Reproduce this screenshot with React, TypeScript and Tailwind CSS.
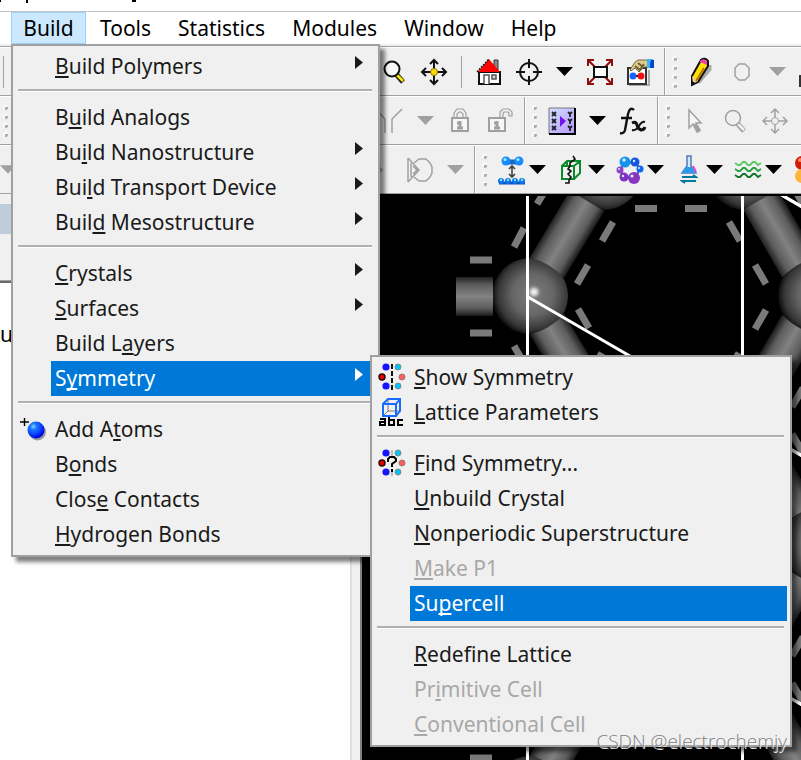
import type { ReactNode } from 'react';

interface MenuEntry {
  label: string;
  // index of the underlined mnemonic letter
  hot: number;
  icon?: ReactNode;
  submenu?: boolean;
  active?: boolean;
  disabled?: boolean;
}

const ATOM_ROWS = [-498, -249, 0, 249, 498];

function MirrorIcon({ question = false }: { question?: boolean }) {
  return (
    <svg width="28" height="28" viewBox="0 0 28 28" aria-hidden="true">
      <circle cx="8" cy="4" r="3.6" fill="#1414ff" />
      <circle cx="8" cy="23" r="3.6" fill="#1414ff" />
      <circle cx="20" cy="4" r="3" fill="#00c4f5" stroke="#7f8c8c" />
      <circle cx="20" cy="23" r="3" fill="#00c4f5" stroke="#7f8c8c" />
      <circle cx="4" cy="14" r="3" fill="#e80000" stroke="#300" strokeWidth="1.4" />
      <circle cx="24" cy="14" r="3" fill="#ff5c5c" stroke="#977" />
      {question ? (
        <>
          <path d="M14 1v6M14 22v5" stroke="#888" />
          <path d="M10 13v-3l2-2h4l2 2v2l-4 3v3M14 20v3" fill="none" stroke="#000" strokeWidth="2" />
        </>
      ) : (
        <path d="M14 1v26" stroke="#111" strokeWidth="2" strokeDasharray="5 2" />
      )}
    </svg>
  );
}

function LatticeIcon() {
  return (
    <svg width="28" height="30" viewBox="0 0 28 30" aria-hidden="true">
      <path d="M10 2v12M10 14h12M10 14l-5 5" stroke="#777" fill="none" />
      <path d="M5 7h13v12H5zM5 7l5-5h12v12l-4 5M18 7l4-5" fill="none" stroke="#176bff" strokeWidth="2" />
      <path
        d="M2 22h5v6H2v-3h5M11 20v8h5v-5h-5M25 23h-5v5h5"
        fill="none"
        stroke="#000"
        strokeWidth="2"
      />
    </svg>
  );
}

function AddAtomIcon() {
  return (
    <svg width="28" height="28" viewBox="0 0 28 28" aria-hidden="true">
      <defs>
        <radialGradient id="blueBall" cx="0.35" cy="0.3" r="0.7">
          <stop offset="0" stopColor="#8fd0ff" />
          <stop offset="0.25" stopColor="#1c7dff" />
          <stop offset="0.7" stopColor="#0838ff" />
          <stop offset="1" stopColor="#0000d8" />
        </radialGradient>
      </defs>
      <circle cx="18.5" cy="17" r="8.5" fill="#999" />
      <circle cx="17" cy="15" r="8.5" fill="url(#blueBall)" />
      <path d="M1 7h9M5.500 3v8" stroke="#000" strokeWidth="1.4" />
    </svg>
  );
}

const buildGroups: MenuEntry[][] = [
  [{ label: 'Build Polymers', hot: 0, submenu: true }],
  [
    { label: 'Build Analogs', hot: 1 },
    { label: 'Build Nanostructure', hot: 2, submenu: true },
    { label: 'Build Transport Device', hot: 3, submenu: true },
    { label: 'Build Mesostructure', hot: 4, submenu: true },
  ],
  [
    { label: 'Crystals', hot: 0, submenu: true },
    { label: 'Surfaces', hot: 0, submenu: true },
    { label: 'Build Layers', hot: 7 },
    { label: 'Symmetry', hot: 1, submenu: true, active: true },
  ],
  [
    { label: 'Add Atoms', hot: 5, icon: <AddAtomIcon /> },
    { label: 'Bonds', hot: 1 },
    { label: 'Close Contacts', hot: 4 },
    { label: 'Hydrogen Bonds', hot: 0 },
  ],
];

const symmetryGroups: MenuEntry[][] = [
  [
    { label: 'Show Symmetry', hot: 0, icon: <MirrorIcon /> },
    { label: 'Lattice Parameters', hot: 0, icon: <LatticeIcon /> },
  ],
  [
    { label: 'Find Symmetry...', hot: 0, icon: <MirrorIcon question /> },
    { label: 'Unbuild Crystal', hot: 0 },
    { label: 'Nonperiodic Superstructure', hot: 0 },
    { label: 'Make P1', hot: 0, disabled: true },
    { label: 'Supercell', hot: 2, active: true },
  ],
  [
    { label: 'Redefine Lattice', hot: 0 },
    { label: 'Primitive Cell', hot: 2, disabled: true },
    { label: 'Conventional Cell', hot: 0, disabled: true },
  ],
];

function MenuRow({ entry }: { entry: MenuEntry }) {
  const { label, hot } = entry;
  let tone = 'text-[#1a1a1a]';
  if (entry.active) tone = 'bg-[#0078d7] text-white';
  if (entry.disabled) tone = 'text-[#a8a8a8]';

  return (
    <button type="button" role="menuitem" disabled={entry.disabled} className="flex h-[35px] w-full text-left">
      <span className="flex w-[38px] shrink-0 items-center self-stretch pb-[2px] pl-[6px]">{entry.icon}</span>
      <span className={`flex h-full flex-1 items-center justify-between pr-3 pb-[2px] pl-1 ${tone}`}>
        <span className="whitespace-nowrap">
          {label.slice(0, hot)}
          <span className="underline decoration-2 underline-offset-2 [text-decoration-skip-ink:none]">{label[hot]}</span>
          {label.slice(hot + 1)}
        </span>
        {entry.submenu && (
          <svg width="8" height="13" viewBox="0 0 8 13" className="mb-[6px]" aria-hidden="true">
            <path d="M0 0l8 6.500-8 6.500z" fill="currentColor" />
          </svg>
        )}
      </span>
    </button>
  );
}

function Menu({ groups, name }: { groups: MenuEntry[][]; name: string }) {
  return (
    <div
      role="menu"
      aria-label={name}
      className="border-2 border-[#a0a0a0] bg-[#f0f0f0] py-[3px] pr-[3px] shadow-[5px_5px_4px_rgba(0,0,0,0.5)]"
    >
      {groups.map((group, i) => (
        <div key={i}>
          {i > 0 && (
            <div className="h-4 pt-[5px] pr-[3px] pl-[5px]">
              <div className="h-[3px] w-full border-t-2 border-b border-t-[#b0b0b0] border-b-white" />
            </div>
          )}
          {group.map((entry) => (
            <MenuRow key={entry.label} entry={entry} />
          ))}
        </div>
      ))}
    </div>
  );
}

function Tool({ label, className = 'w-10', children }: { label: string; className?: string; children: ReactNode }) {
  return (
    <button type="button" aria-label={label} className={`flex h-full shrink-0 items-center justify-center ${className}`}>
      {children}
    </button>
  );
}

function DropArrow({ label, dim = false, className = 'w-[31px]' }: { label: string; dim?: boolean; className?: string }) {
  return (
    <Tool label={label} className={className}>
      <svg width="17" height="9" viewBox="0 0 17 9" aria-hidden="true">
        <path d="M0 0h17L8.500 9z" fill={dim ? '#a0a0a0' : '#000'} />
      </svg>
    </Tool>
  );
}

function Dots() {
  return (
    <div className="flex flex-col gap-1">
      {[0, 1, 2, 3].map((n) => (
        <div key={n} className="h-[5px] w-[5px] rounded-xs border-t-2 border-l-2 border-[#fafafa] bg-[#acacac]" />
      ))}
    </div>
  );
}

function Grip() {
  return (
    <div className="flex h-full w-[22px] shrink-0 items-center gap-[6px] pl-1">
      <div className="h-full w-[2px] border-r border-white bg-[#a0a0a0]" />
      <Dots />
    </div>
  );
}

function Magnifier({ dim = false }: { dim?: boolean }) {
  return (
    <svg width="24" height="26" viewBox="0 0 24 26" aria-hidden="true">
      <path d="M14 15l7 8" stroke={dim ? '#a0a0a0' : '#222'} strokeWidth="5" />
      <path d="M14 15l7 7" stroke={dim ? '#f0f0f0' : '#ffe800'} strokeWidth="2.5" />
      <circle
        cx="10"
        cy="10"
        r="7.5"
        fill={dim ? 'none' : '#f8f8f8'}
        stroke={dim ? '#a0a0a0' : '#111'}
        strokeWidth={dim ? 1.5 : 2}
      />
    </svg>
  );
}

function MoveIcon({ dim = false }: { dim?: boolean }) {
  return (
    <svg width="28" height="28" viewBox="0 0 28 28" aria-hidden="true">
      <path
        d="M14 2v24M2 14h24M10 6l4-4 4 4M10 22l4 4 4-4M6 10l-4 4 4 4M22 10l4 4-4 4"
        fill="none"
        stroke={dim ? '#a0a0a0' : '#111'}
        strokeWidth={dim ? 1.5 : 2}
      />
      <circle cx="14" cy="14" r="3.5" fill={dim ? '#f0f0f0' : '#ffd900'} stroke={dim ? '#a0a0a0' : '#8a7400'} />
    </svg>
  );
}

function HomeIcon() {
  return (
    <svg width="27" height="28" viewBox="0 0 27 28" aria-hidden="true">
      <path d="M18 2h4v10h-4z" fill="#888" stroke="#333" />
      <path d="M3 14h21v12H3z" fill="#fff" stroke="#111" strokeWidth="2" />
      <path d="M13 1l11 13H2z" fill="#f00" />
      <path d="M1 14L13 1" stroke="#111" strokeWidth="1.5" strokeDasharray="2 1" />
      <path d="M8 26v-9h5v9" fill="#fff" stroke="#555" strokeWidth="1.5" />
      <path d="M16 17h4v4h-4z" fill="#ddd" stroke="#555" strokeWidth="1.5" />
    </svg>
  );
}

function TargetIcon() {
  return (
    <svg width="28" height="28" viewBox="0 0 28 28" fill="none" stroke="#111" strokeWidth="2" aria-hidden="true">
      <circle cx="14" cy="14" r="9" />
      <path d="M14 1v9M14 18v9M1 14h9M18 14h9" />
    </svg>
  );
}

function FitIcon() {
  return (
    <svg width="26" height="26" viewBox="0 0 26 26" fill="none" aria-hidden="true">
      <path d="M1 7V1h6M19 1h6v6M25 19v6h-6M7 25H1v-6M1 1l7 7M25 1l-7 7M25 25l-7-7M1 25l7-7" stroke="#8b1010" strokeWidth="2" />
      <path d="M7 8h13v10H7z" fill="#fff" stroke="#111" strokeWidth="2" />
    </svg>
  );
}

function DisplayStyleIcon() {
  return (
    <svg width="30" height="28" viewBox="0 0 30 28" aria-hidden="true">
      <path d="M4 27h20V12" fill="none" stroke="#aaa" strokeWidth="2" />
      <path d="M3 10h18v16H3z" fill="#fff" stroke="#333" strokeWidth="2" />
      <path d="M8 18h8" stroke="#111" strokeWidth="2" />
      <circle cx="8" cy="18" r="3.5" fill="#1565ff" />
      <circle cx="16" cy="18" r="3.5" fill="#f01010" />
      <path d="M5 12l5-8 3-2h10v7h-4l-5 5-4-4-4 3z" fill="#dfcb8d" stroke="#746842" />
      <path d="M10 8l5 4 4-6M13 5l5 4" fill="none" stroke="#6d6236" strokeWidth="2" />
      <path d="M22 1h6v9h-6z" fill="#3ab4f4" />
      <path d="M26 2h3v8h-4V6z" fill="#0048d0" />
    </svg>
  );
}

function PencilIcon() {
  return (
    <svg width="24" height="30" viewBox="0 0 24 30" aria-hidden="true">
      <path d="M8 25l11-13V8" fill="none" stroke="#aaa" strokeWidth="5" />
      <path d="M2 28V19L11 3q4-3 7 1v5L8 25z" fill="#ffe000" stroke="#111" strokeWidth="2" />
      <path d="M10 4q4-4 7 1v3l-7-3z" fill="#f03cb4" />
      <path d="M2 19l6 5-5 3z" fill="#f5cf9a" />
      <path d="M14 11L6 24" stroke="#b87800" strokeWidth="2" />
      <path d="M1 24v5l5-3z" fill="#111" />
    </svg>
  );
}

function Padlock({ open = false }: { open?: boolean }) {
  return (
    <svg width="27" height="26" viewBox="0 0 27 26" fill="none" stroke="#a0a0a0" strokeWidth="2" aria-hidden="true">
      <path d={open ? 'M2 10h16v13H2z' : 'M5 10h16v13H5z'} fill="#f6f6f6" />
      <path
        d={open ? 'M13 10V4l3-3h6l3 3v4h-3V5l-1-1h-4l-1 2v4' : 'M7 10V5l3-4h6l3 4v5M10 10V6l2-2h2l2 2v4'}
        strokeWidth="1.2"
      />
      <path d={open ? 'M10 13v7M7 20h6M7 15h3' : 'M13 13v7M10 20h6M10 15h3'} strokeWidth="3" />
    </svg>
  );
}

function ConvertIcon() {
  return (
    <svg width="28" height="28" viewBox="0 0 28 28" fill="none" aria-hidden="true">
      <defs>
        <linearGradient id="convertFill" x1="0" y1="0" x2="1" y2="1">
          <stop offset="0" stopColor="#cfe0ff" />
          <stop offset="1" stopColor="#b898ff" />
        </linearGradient>
      </defs>
      <path d="M1 1h26v26H1z" fill="url(#convertFill)" />
      <path d="M1 27V1h26" stroke="#777" />
      <path d="M1 27h26V1" stroke="#000" strokeWidth="2" />
      <path
        d="M4 5l4 4M8 5L4 9M4 12l4 4M8 12l-4 4M4 19l4 4M8 19l-4 4M20 5l2 2 2-2M22 7v3M20 12l2 2 2-2M22 14v3M20 19l2 2 2-2M22 21v3"
        stroke="#222"
        strokeWidth="1.8"
      />
      <path d="M12 9l6 5-6 6z" fill="#7a12f0" />
    </svg>
  );
}

function FunctionIcon() {
  return (
    <svg width="28" height="28" viewBox="0 0 28 28" fill="none" stroke="#111" aria-hidden="true">
      <path d="M15 3q-4-4-6 4L6 23q-1 4-5 3M2 11h11" strokeWidth="2.4" />
      <path d="M13 16q4-2 5 2t4 5q3 0 4-3" strokeWidth="3" />
      <path d="M26 15q-3-1-6 4t-7 4" strokeWidth="2" />
    </svg>
  );
}

function PointerIcon() {
  return (
    <svg width="18" height="26" viewBox="0 0 18 26" fill="none" aria-hidden="true">
      <path d="M3 2v18l4-4 4 8 3-2-4-7h5z" fill="#f6f6f6" stroke="#a0a0a0" strokeWidth="1.5" />
      <path d="M9 16l4 8" stroke="#a0a0a0" strokeWidth="3" />
    </svg>
  );
}

function DockIcon() {
  return (
    <svg width="28" height="30" viewBox="0 0 28 30" aria-hidden="true">
      <path d="M8 7h12" stroke="#1769c5" strokeWidth="5" />
      <circle cx="8" cy="6" r="4.5" fill="#168cff" />
      <circle cx="21" cy="6" r="4.5" fill="#168cff" />
      <circle cx="7" cy="4.5" r="1.5" fill="#9ff0ff" />
      <circle cx="20" cy="4.5" r="1.5" fill="#9ff0ff" />
      <path d="M14 11v11M11 14l3-3 3 3M11 19l3 3 3-3" fill="none" stroke="#444" strokeWidth="1.6" />
      <path d="M1 28h26" stroke="#0a50c0" strokeWidth="3" />
      {[3, 10, 17, 24].map((x) => (
        <g key={x}>
          <circle cx={x} cy="26" r="3" fill="#0c72e8" />
          <circle cx={x} cy="25" r="1.2" fill="#7fe6ff" />
        </g>
      ))}
    </svg>
  );
}

function CrystalBoxIcon() {
  return (
    <svg width="22" height="30" viewBox="0 0 22 30" fill="none" aria-hidden="true">
      <path d="M2 11h12v13H2zM2 11l5-5h13v12l-6 6M14 11l6-5M7 6v5" stroke="#0b8a2c" strokeWidth="2" />
      <path d="M13 1l2 3-5 4v3l-2 3 3 2-3 3 3 3-2 3v3H5" stroke="#111" strokeWidth="1.6" />
    </svg>
  );
}

function RingIcon() {
  return (
    <svg width="28" height="30" viewBox="0 0 28 30" aria-hidden="true">
      <path d="M9 7l10 1 5 5-4 9-12 1-4-8z" fill="none" stroke="#4056a0" strokeWidth="2" />
      <circle cx="9" cy="7" r="5.5" fill="#1593e8" />
      <circle cx="19" cy="7" r="4.5" fill="#1458dc" />
      <circle cx="24" cy="14" r="3.5" fill="#1268f0" />
      <circle cx="4" cy="15" r="3.5" fill="#9140cc" />
      <circle cx="8" cy="22" r="4.5" fill="#8030c4" />
      <circle cx="18" cy="23" r="6" fill="#8836c0" />
      <g fill="#c8f2ff">
        <circle cx="8" cy="5" r="1.8" />
        <circle cx="18" cy="6" r="1.2" />
        <circle cx="23" cy="13" r="1" />
        <circle cx="3" cy="14" r="1" />
        <circle cx="7" cy="21" r="1.2" />
        <circle cx="16" cy="21" r="1.6" />
      </g>
    </svg>
  );
}

function FlaskIcon() {
  return (
    <svg width="18" height="30" viewBox="0 0 18 30" aria-hidden="true">
      <path d="M7 1v10l-5 7h14l-5-7V1z" fill="#c9ecff" stroke="#5d74b8" strokeWidth="1.5" />
      <path d="M6 12h6l4 6H2z" fill="#289cec" />
      <path d="M13 11l3 6" stroke="#ec45d4" strokeWidth="2" />
      <path d="M2 22h14l-3-2M16 26H2l3 2" fill="none" stroke="#007a9c" strokeWidth="2" />
    </svg>
  );
}

function WavesIcon() {
  return (
    <svg width="28" height="18" viewBox="0 0 28 18" fill="none" strokeWidth="1.8" aria-hidden="true">
      <path d="M1 2l3 2h2l3-3h2l3 3h2l3-3h2l3 3 3-2" stroke="#5ccc66" />
      <path d="M1 8l3 2h2l3-3h2l3 3h2l3-3h2l3 3 3-2" stroke="#2ba044" />
      <path d="M1 14l3 2h2l3-3h2l3 3h2l3-3h2l3 3 3-2" stroke="#12752a" />
    </svg>
  );
}

const moduleTools = [
  { name: 'Docking', icon: <DockIcon /> },
  { name: 'Crystal', icon: <CrystalBoxIcon /> },
  { name: 'Ring', icon: <RingIcon /> },
  { name: 'Flask', icon: <FlaskIcon /> },
  { name: 'Waves', icon: <WavesIcon /> },
];

function Toolbars() {
  const row = 'flex h-[49px] items-center overflow-hidden border-t border-b border-t-white border-b-[#a0a0a0] bg-[#f0f0f0]';
  return (
    <div role="toolbar" aria-label="Toolbars" className="border-t border-[#a0a0a0]">
      <div className={row}>
        <div className="flex w-[374px] shrink-0 items-center pl-[3px]">
          <div className="h-8 w-px bg-[#a0a0a0]" />
        </div>
        <Tool label="Zoom"><Magnifier /></Tool>
        <Tool label="Move"><MoveIcon /></Tool>
        <div className="flex w-[15px] shrink-0 justify-center">
          <div className="h-8 w-px bg-[#a0a0a0]" />
        </div>
        <Tool label="Reset view"><HomeIcon /></Tool>
        <Tool label="Center"><TargetIcon /></Tool>
        <DropArrow label="Center options" />
        <Tool label="Fit to view"><FitIcon /></Tool>
        <Tool label="Display style"><DisplayStyleIcon /></Tool>
        <Grip />
        <Tool label="Sketch atom"><PencilIcon /></Tool>
        <Tool label="Sketch ring">
          <svg width="16" height="18" viewBox="0 0 16 18" aria-hidden="true">
            <path d="M5 1h6l4 4v8l-4 4H5l-4-4V5z" fill="none" stroke="#a0a0a0" strokeWidth="1.5" />
          </svg>
        </Tool>
        <DropArrow label="Ring options" dim />
        <div className="ml-[6px] h-5 w-2 shrink-0 self-end border-b-8 border-[#f0f0f0] bg-[#333]" />
      </div>

      <div className={row}>
        <div className="flex w-[370px] shrink-0 items-center pl-[3px]">
          <Dots />
        </div>
        <Tool label="Clean">
          <svg width="32" height="28" viewBox="0 0 32 28" fill="none" stroke="#a0a0a0" strokeWidth="1.5" aria-hidden="true">
            <path d="M1 1l10 11v14M18 26V12L28 2" />
          </svg>
        </Tool>
        <DropArrow label="Clean options" dim className="w-[30px]" />
        <Tool label="Lock"><Padlock /></Tool>
        <Tool label="Unlock"><Padlock open /></Tool>
        <Grip />
        <Tool label="Convert"><ConvertIcon /></Tool>
        <DropArrow label="Convert options" />
        <Tool label="Function"><FunctionIcon /></Tool>
        <Grip />
        <Tool label="Select"><PointerIcon /></Tool>
        <Tool label="Zoom chart"><Magnifier dim /></Tool>
        <Tool label="Move chart"><MoveIcon dim /></Tool>
      </div>

      <div className={row}>
        <div className="flex w-[360px] shrink-0 items-center">
          <DropArrow label="Motion options" dim className="w-4" />
        </div>
        <Tool label="Next">
          <svg width="8" height="12" viewBox="0 0 8 12" aria-hidden="true">
            <path d="M1 1l5 5-5 5" fill="none" stroke="#a0a0a0" strokeWidth="1.5" />
          </svg>
        </Tool>
        <Tool label="Shape">
          <svg width="28" height="26" viewBox="0 0 28 26" fill="none" stroke="#a0a0a0" strokeWidth="1.5" aria-hidden="true">
            <path d="M2 1v24M2 1l11 12L2 25M5 6v14M7 9l4 4-4 4" />
            <path d="M8 6l5-4h7l4 4 2 4v6l-2 4-4 4h-7l-5-4" />
          </svg>
        </Tool>
        <DropArrow label="Shape options" dim className="w-[30px]" />
        <Grip />
        <div className="ml-[3px] flex h-full items-center gap-2">
          {moduleTools.map(({ name, icon }) => (
            <div key={name} className="flex h-full items-center">
              <Tool label={name} className="w-[34px]">{icon}</Tool>
              <DropArrow label={`${name} options`} className="w-[17px]" />
            </div>
          ))}
        </div>
        <Tool label="More modules" className="ml-3 w-5">
          <svg width="20" height="28" viewBox="0 0 20 28" aria-hidden="true">
            <circle cx="8" cy="7" r="7" fill="#d01c08" />
            <circle cx="8" cy="20" r="7" fill="#ffb43c" />
            <circle cx="6" cy="4" r="2" fill="#ff8a60" />
          </svg>
        </Tool>
      </div>
    </div>
  );
}

// Cylinder lying along +x, turned round the atom centre
function Bond({ x, y, angle }: { x: number; y: number; angle: number }) {
  return (
    <path
      d={`M${x + 33} ${y - 20}h78v40h-78q6-20 0-40`}
      fill="url(#bond)"
      transform={`rotate(${angle} ${x} ${y})`}
    />
  );
}

function Atom({ x, y }: { x: number; y: number }) {
  return <circle cx={x} cy={y} r="38" fill="url(#atom)" />;
}

function StructureView() {
  return (
    <svg width="439" height="564" viewBox="362 196 439 564" className="block shrink-0 bg-black" role="img" aria-label="Crystal structure">
      <defs>
        <radialGradient id="atom" cx="0.54" cy="0.48" r="0.54">
          <stop offset="0" stopColor="#7c7c7c" />
          <stop offset="0.5" stopColor="#666" />
          <stop offset="0.85" stopColor="#363636" />
          <stop offset="1" stopColor="#0c0c0c" />
        </radialGradient>
        <linearGradient id="bond" x1="0" y1="0" x2="0" y2="1">
          <stop offset="0" stopColor="#202020" />
          <stop offset="0.2" stopColor="#5c5c5c" />
          <stop offset="0.5" stopColor="#828282" />
          <stop offset="0.8" stopColor="#5c5c5c" />
          <stop offset="1" stopColor="#181818" />
        </linearGradient>
        <radialGradient id="glint">
          <stop offset="0" stopColor="#fff" />
          <stop offset="0.4" stopColor="#ccc" />
          <stop offset="1" stopColor="#777" stopOpacity="0" />
        </radialGradient>
      </defs>

      {ATOM_ROWS.map((dy) => (
        <g key={dy} transform={`translate(0 ${dy})`}>
          <Atom x={530} y={296} />
          <Atom x={604} y={172} />
          <Atom x={745} y={172} />
          <Atom x={816} y={296} />
          <rect x="456" y="277" width="37" height="39" fill="url(#bond)" />
          <Bond x={530} y={296} angle={-59} />
          <Bond x={530} y={296} angle={59} />
          <Bond x={816} y={296} angle={-120} />
          <Bond x={816} y={296} angle={120} />
          <g stroke="#7a7a7a" strokeWidth="7">
            <path d="M470 260h22M470 333h22M635 208.500h22M685 208.500h22" />
            <path d="M545 191l-8 13M524 228l-10 19M613 222l-11 19M588 265l-11 19M578 309l11 19M514 346l11 19" />
            <path d="M602 353l-8 14M729 222l11 19M755 265l11 19M766 310l-11 19M739 353l-8 14" />
            <path d="M803 388l-11 19M792 434l11 19" />
          </g>
          <circle cx="534" cy="292" r="8" fill="url(#glint)" />
          <path d="M528 297L816 464" stroke="#fff" strokeWidth="3" />
          <path d="M742 172L816 215" stroke="#fff" strokeWidth="3" />
        </g>
      ))}
      <path d="M527.500 196v564M742.500 196v564" stroke="#fff" strokeWidth="3" />
    </svg>
  );
}

export default function App() {
  return (
    <div className="relative overflow-hidden bg-white font-['Noto_Sans','Open_Sans',sans-serif] text-[21px] leading-[30px]">
      {/* bottom edge of the text line above the window */}
      <div className="flex h-3 items-start border-b border-[#c4c4c4]">
        <div className="h-[2px] w-px bg-black" />
        <div className="ml-[25px] h-[3px] w-[2px] bg-black" />
        <div className="ml-[104px] h-[2px] w-1 bg-black" />
      </div>

      <nav role="menubar" aria-label="Main menu" className="flex h-8 gap-px pl-[11px]">
        <button type="button" role="menuitem" className="w-[75px] border border-[#99d1ff] bg-[#cce8ff] text-center">
          Build
        </button>
        {['Tools', 'Statistics', 'Modules', 'Window', 'Help'].map((item) => (
          <button key={item} type="button" role="menuitem" className="px-[13px]">
            {item}
          </button>
        ))}
      </nav>
      <div className="h-[2px] bg-[#f0f0f0]" />

      <Toolbars />

      <main className="flex h-[566px] bg-black">
        <div className="flex flex-1 flex-col overflow-hidden bg-[#f0f0f0]">
          <div className="mt-[10px] h-[30px] bg-[#bfcddb]" />
          <div className="mt-[46px] h-[3px] border-t border-[#a0a0a0] bg-[#696969]" />
          <div className="mr-2 flex-1 border-r-2 border-[#e0e0e0] bg-white pt-9">u</div>
        </div>
        <div className="flex flex-col border-l-2 border-[#808080] pt-[2px]">
          <StructureView />
        </div>
      </main>

      <div className="absolute top-11 left-[11px] w-[369px]">
        <Menu name="Build" groups={buildGroups} />
      </div>
      <div className="absolute top-[355px] left-[370px] w-[422px]">
        <Menu name="Symmetry" groups={symmetryGroups} />
      </div>

      <div className="absolute right-[14px] bottom-1 font-['Open_Sans',sans-serif] text-[19px] leading-[30px] font-light text-[#808080] [text-shadow:1px_1px_0_#f4f4f4]">
        CSDN @electrochemjy
      </div>
    </div>
  );
}
